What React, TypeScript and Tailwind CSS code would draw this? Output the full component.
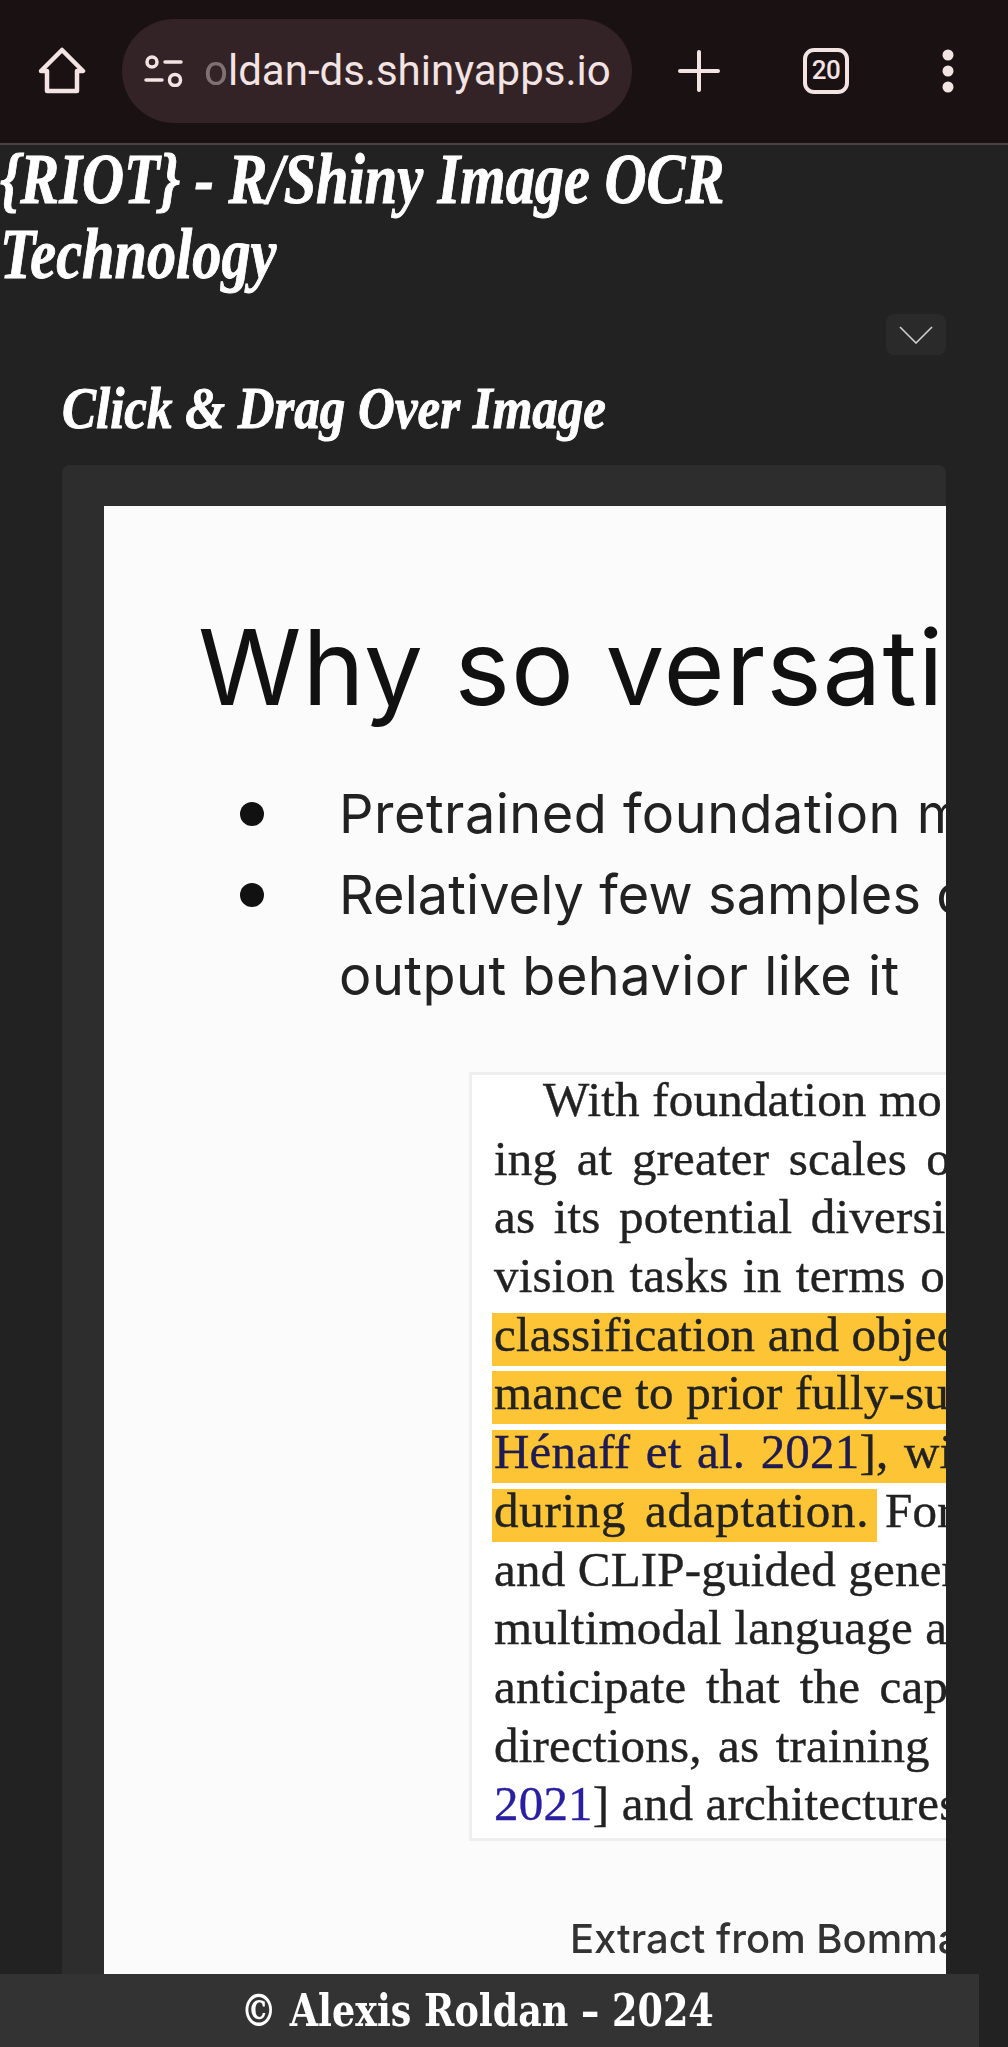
import React from "react";

const Home = () => (
  <svg width="48" height="48" viewBox="0 0 48 48" fill="none" stroke="#f3e3e3" strokeWidth="4.5" strokeLinejoin="round" strokeLinecap="round">
    <path d="M3 24 L24 3 L45 24 L39 24 L39 44 L9 44 L9 24 Z" />
  </svg>
);

const Sliders = () => (
  <svg width="40" height="32" viewBox="0 0 40 32" fill="none" stroke="#f3e3e3" strokeWidth="3.5" strokeLinecap="round">
    <circle cx="8" cy="7" r="5" />
    <path d="M21 7 H37" />
    <path d="M2 25 H18" />
    <circle cx="31" cy="25" r="5.5" />
  </svg>
);

const Plus = () => (
  <svg width="42" height="42" viewBox="0 0 42 42" stroke="#f3e3e3" strokeWidth="4" strokeLinecap="round">
    <path d="M21 2 V40 M2 21 H40" />
  </svg>
);

const Dots = () => (
  <svg width="12" height="44" viewBox="0 0 12 44" fill="#f3e3e3">
    <circle cx="6" cy="6" r="5.5" />
    <circle cx="6" cy="22" r="5.5" />
    <circle cx="6" cy="38" r="5.5" />
  </svg>
);

const Chevron = () => (
  <svg width="34" height="18" viewBox="0 0 34 18" fill="none" stroke="#cfcfcf" strokeWidth="1.6">
    <path d="M1 1 L17 17 L33 1" />
  </svg>
);

const Line = ({ children }: { children: React.ReactNode }) => (
  <div className="h-[58.7px] pl-[22px] leading-[50px] whitespace-nowrap">{children}</div>
);

const Mark = ({ children }: { children: React.ReactNode }) => (
  <div className="h-[58.7px] whitespace-nowrap pl-[20px] py-[3px]">
    <div className="h-[53px] bg-[#fdc535] pl-[2px] leading-[44px]">{children}</div>
  </div>
);

export default function App() {
  return (
    <div className="relative flex h-[2047px] w-[1008px] flex-col overflow-hidden bg-[#222222]">
      <header className="relative z-10 flex h-[145px] shrink-0 items-center border-b-[2px] border-[#4a4244] bg-[#1a1112] pb-[2px]">
        <div className="ml-[38px] flex w-[48px] shrink-0 justify-center"><Home /></div>
        <div className="ml-[36px] flex h-[104px] w-[510px] shrink-0 items-center overflow-hidden rounded-[52px] bg-[#332326] pl-[22px]">
          <Sliders />
          <span className="ml-[20px] whitespace-nowrap font-['Roboto',sans-serif] text-[42px] text-[#f3e3e3]">
            <span className="opacity-40">o</span>ldan-ds.shinyapps.io
          </span>
        </div>
        <div className="ml-[46px] flex shrink-0"><Plus /></div>
        <div className="ml-[83px] flex h-[46px] w-[46px] shrink-0 items-center justify-center rounded-[11px] border-[4px] border-[#f3e3e3] font-['Roboto',sans-serif] text-[26px] font-medium tracking-[-0.5px] text-[#f3e3e3]">20</div>
        <div className="ml-[93px] flex shrink-0"><Dots /></div>
      </header>

      <main className="min-h-0 flex-1">
        <h1 className="relative z-20 -mt-[3px] origin-left scale-x-[0.81] whitespace-nowrap font-['Liberation_Serif',serif] text-[72px] font-bold italic leading-[75px] text-white [-webkit-text-stroke:1px_white]">
          {"{RIOT} - R/Shiny Image OCR"}
          <br />
          Technology
        </h1>
        <div className="mr-[62px] mt-[22px] flex justify-end">
          <div className="flex h-[41px] w-[60px] items-center justify-center rounded-lg bg-[#2a2a2a]"><Chevron /></div>
        </div>
        <div className="px-[62px]">
          <h2 className="mt-[8px] origin-left scale-x-[0.85] whitespace-nowrap pb-[12px] font-['Liberation_Serif',serif] text-[60px] font-bold italic leading-[90px] text-white [-webkit-text-stroke:1px_white]">
            Click &amp; Drag Over Image
          </h2>
          <div className="rounded-t-lg bg-[#2d2d2d] pl-[42px] pt-[41px]">
            <div className="h-[1480px] overflow-hidden bg-[#fbfbfb] pt-[111px]">
              <div className="blur-[0.7px]">
                <div className="whitespace-nowrap pl-[94px] font-['Inter',sans-serif] text-[105px] tracking-[1px] leading-[100px] text-[#111111]">Why so versati</div>
                <div className="mt-[56px] font-['Inter',sans-serif] text-[54px] tracking-[0.5px] leading-[81px] text-[#222222]">
                  <div className="flex items-center whitespace-nowrap pl-[136px]">
                    <span className="h-[24px] w-[24px] shrink-0 rounded-full bg-[#111111]" />
                    <span className="ml-[75px]">Pretrained foundation m</span>
                  </div>
                  <div className="flex items-center whitespace-nowrap pl-[136px]">
                    <span className="h-[24px] w-[24px] shrink-0 rounded-full bg-[#111111]" />
                    <span className="ml-[75px] tracking-[0.1px]">Relatively few samples o</span>
                  </div>
                  <div className="whitespace-nowrap pl-[235px]">output behavior like it</div>
                </div>
                <div className="ml-[365px] mt-[56px] w-[600px] border-[3px] border-[#eeeeee] bg-white font-['Liberation_Serif',serif] text-[49px] tracking-[0.2px] text-[#222222] [-webkit-text-stroke:0.4px_#222222]">
                  <div className="h-[58.7px] whitespace-nowrap pl-[71px] leading-[50px]">With foundation mo</div>
                  <Line><span className="[word-spacing:7px]">ing at greater scales o</span></Line>
                  <Line><span className="[word-spacing:6px]">as its potential diversi</span></Line>
                  <Line><span className="[word-spacing:2px]">vision tasks in terms o</span></Line>
                  <Mark>classification and objec</Mark>
                  <Mark>mance to prior fully-su</Mark>
                  <Mark><span className="[word-spacing:3px]"><span className="text-[#1f1a5c]">Hénaff et al. 2021</span>], wi</span></Mark>
                  <div className="flex h-[58.7px] items-start whitespace-nowrap pl-[20px] pt-[3px]">
                    <span className="h-[53px] w-[385px] bg-[#fdc535] pl-[2px] leading-[44px] tracking-[0.7px] [word-spacing:6px]">during adaptation.</span>
                    <span className="ml-[8px] leading-[44px]">For</span>
                  </div>
                  <Line>and CLIP-guided gener</Line>
                  <Line>multimodal language a</Line>
                  <Line><span className="[word-spacing:7px]">anticipate that the cap</span></Line>
                  <Line><span className="[word-spacing:4px]">directions, as training</span></Line>
                  <Line><span className="text-[#2a1fa0] [-webkit-text-stroke:0.4px_#2a1fa0]">2021</span>] and architectures</Line>
                </div>
                <div className="ml-[466px] mt-[74px] whitespace-nowrap font-['Inter',sans-serif] text-[40px] font-medium leading-[48px] text-[#333333]">Extract from Bomma</div>
              </div>
            </div>
          </div>
        </div>
      </main>

      <footer className="relative z-10 flex h-[73px] w-[979px] shrink-0 items-center justify-center bg-[#333333] pr-[24px] font-['DejaVu_Serif',serif] text-[44px] font-bold text-white">
        <span className="scale-x-[0.83] whitespace-nowrap">© Alexis Roldan – 2024</span>
      </footer>
    </div>
  );
}
